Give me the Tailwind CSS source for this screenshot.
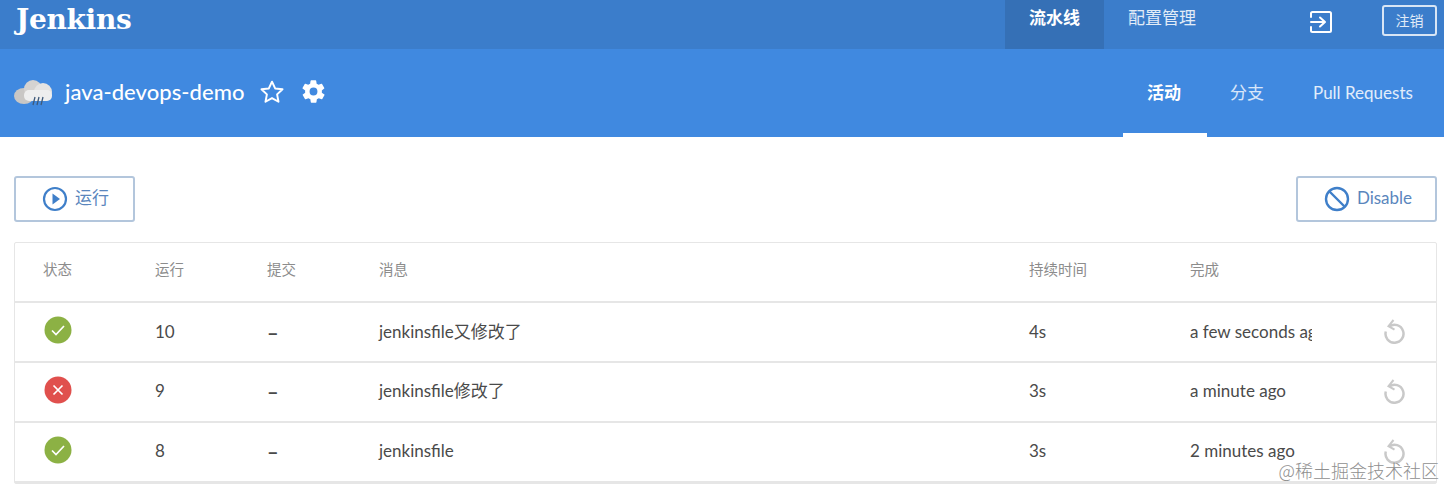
<!DOCTYPE html>
<html lang="zh">
<head>
<meta charset="utf-8">
<script src="https://cdn.jsdelivr.net/npm/@tailwindcss/browser@4"></script>
</head>
<body class="bg-white overflow-hidden font-['Lato','Noto_Sans_CJK_SC',sans-serif] text-[#4a4a4a] h-[488px] relative">
<header class="h-[49px] bg-[#3b7dcb] flex items-stretch text-white">
  <div class="pl-[16px] font-['DejaVu_Serif',serif] font-bold text-[28px] leading-[40px] tracking-[-0.3px]">Jenkins</div>
  <div class="ml-auto flex items-stretch">
    <div class="w-[99px] bg-[#3570b6] flex justify-center pt-[7px] text-[17px] leading-[22px] font-bold">流水线</div>
    <div class="ml-[24px] w-[68px] pt-[7px] text-[17px] leading-[22px] text-white/85 whitespace-nowrap">配置管理</div>
    <div class="ml-[113px] pt-[10px]">
      <svg width="24" height="24" viewBox="0 0 24 24" fill="none" stroke="white" stroke-width="2" stroke-linecap="round" stroke-linejoin="round"><path d="M2 7V3.500A1.500 1.500 0 0 1 3.500 2h17A1.500 1.500 0 0 1 22 3.500v17a1.500 1.500 0 0 1-1.500 1.500h-17A1.500 1.500 0 0 1 2 20.500V17"/><path d="M2 12h13M11 7.500l5 4.500-5 4.500"/></svg>
    </div>
    <div class="ml-[49px] mr-[7px] mt-[5px] w-[55px] h-[31px] border-2 border-white/80 rounded-[3px] flex items-center justify-center text-[14px] text-white/85">注销</div>
  </div>
</header>
<div class="h-[88px] bg-[#4089e0] flex items-stretch text-white">
  <div class="flex items-center pl-[14px] pb-[3px]">
    <svg width="39" height="28" viewBox="0 0 39 28"><ellipse cx="10" cy="18" rx="10" ry="8" fill="#c9c7c5"/><circle cx="19" cy="11" r="9" fill="#d5d3d1"/><circle cx="29" cy="14" r="9" fill="#e4e3e2"/><rect x="10" y="12" width="28" height="11" rx="5" fill="#eeeeee"/><path d="M21 19l-2 8M25 19l-2 8M29 19l-2 8" stroke="#3f5a7a" stroke-width="1.300"/></svg>
    <span class="ml-[12px] text-[22px] leading-[30px] font-medium tracking-[0.05px]">java-devops-demo</span>
    <svg class="ml-[15px]" width="26" height="26" viewBox="0 0 24 24" fill="none" stroke="white" stroke-width="1.800" stroke-linejoin="round"><path d="M12 2.500l2.900 6.200 6.800.8-5 4.700 1.300 6.800-6-3.400-6 3.400 1.300-6.800-5-4.700 6.800-.8z"/></svg>
    <svg class="ml-[15px]" width="27" height="27" viewBox="0 0 24 24" fill="white"><path fill-rule="evenodd" d="M19.400 13a7.600 7.600 0 0 0 0-2l2.100-1.600a.5.500 0 0 0 .1-.6l-2-3.500a.5.500 0 0 0-.6-.2l-2.500 1a7.300 7.300 0 0 0-1.700-1l-.4-2.700a.5.500 0 0 0-.5-.4h-4a.5.500 0 0 0-.5.400l-.4 2.700a7.300 7.300 0 0 0-1.700 1l-2.500-1a.5.500 0 0 0-.6.200l-2 3.500a.5.500 0 0 0 .1.600L4.600 11a7.600 7.600 0 0 0 0 2l-2.100 1.600a.5.500 0 0 0-.1.600l2 3.500a.5.500 0 0 0 .6.200l2.500-1c.5.400 1.100.7 1.700 1l.4 2.700a.5.500 0 0 0 .5.400h4a.5.500 0 0 0 .5-.4l.4-2.700c.6-.3 1.200-.6 1.700-1l2.500 1a.5.500 0 0 0 .6-.2l2-3.500a.5.500 0 0 0-.1-.6zM12 15.500a3.500 3.500 0 1 1 0-7 3.500 3.500 0 0 1 0 7z"/></svg>
  </div>
  <nav class="ml-auto flex items-stretch text-[17px]">
    <div class="w-[84px] border-b-4 border-white flex justify-center pt-[31px] pr-[2px] leading-[26px] font-bold">活动</div>
    <div class="ml-[23px] w-[34px] pt-[31px] leading-[26px] text-white/80 whitespace-nowrap">分支</div>
    <div class="ml-[49px] mr-[31px] w-[100px] pt-[31px] leading-[26px] text-white/85 whitespace-nowrap">Pull Requests</div>
  </nav>
</div>
<main class="px-[14px] pt-[39px]">
  <div class="flex justify-between mr-[-7px]">
    <button class="w-[121px] h-[46px] border-2 border-[#b3c6dc] rounded-[3px] flex items-center justify-center gap-[7px] pl-[2px] text-[#5a86bd] text-[17px]">
      <svg width="26" height="26" viewBox="0 0 26 26"><circle cx="13" cy="13" r="11" fill="none" stroke="#3f7fc9" stroke-width="2.200"/><path d="M10.500 7.500l7.500 5.500-7.500 5.500z" fill="#3f7fc9"/></svg>
      <span class="-mt-[2px]">运行</span>
    </button>
    <button class="w-[141px] h-[46px] border-2 border-[#b3c6dc] rounded-[3px] flex items-center justify-center gap-[7px] pl-[3px] text-[#5a86bd] text-[17px]">
      <svg width="26" height="26" viewBox="0 0 26 26" fill="none" stroke="#3f7fc9" stroke-width="2.400"><circle cx="13" cy="13" r="11"/><path d="M5.500 5.500l15 15"/></svg>
      <span class="-mt-[3px]">Disable</span>
    </button>
  </div>
  <section class="mt-[20px] mr-[-7px] border border-[#e6e6e6] rounded-[2px] w-[1423px]">
    <div class="grid grid-cols-[111px_112px_112px_650px_161px_1fr] pl-[29px] pb-[4px] h-[60px] items-center text-[14.500px] text-[#8c8c8c] border-b-2 border-[#e6e6e6]">
      <span class="-ml-[1px]">状态</span><span>运行</span><span>提交</span><span>消息</span><span>持续时间</span><span>完成</span>
    </div>
    <div class="grid grid-cols-[111px_112px_112px_650px_161px_122px_1fr] pl-[29px] h-[59.500px] items-center text-[17px] border-b-2 border-[#e6e6e6]">
      <svg class="-mt-[3px]" width="28" height="28" viewBox="0 0 28 28"><circle cx="14" cy="14" r="13.500" fill="#8cb144"/><path d="M8 14.500l4 4 8-8.500" fill="none" stroke="white" stroke-width="1.700"/></svg>
      <span>10</span><span class="font-bold text-[20px]">–</span><span>jenkinsfile又修改了</span><span>4s</span><span class="overflow-hidden whitespace-nowrap">a few seconds ago</span>
      <svg class="ml-[70px] -mt-[1px]" width="24" height="26" viewBox="0 0 24 26" fill="none" stroke="#c9c9c9" stroke-width="2.500"><path d="M7.200 8.500a9 9 0 1 1-3.400 5"/><path d="M11.500 2L6.500 8.200l6 3.500" stroke-width="2"/></svg>
    </div>
    <div class="grid grid-cols-[111px_112px_112px_650px_161px_122px_1fr] pl-[29px] h-[60px] pb-[1px] items-center text-[17px] border-b-2 border-[#e6e6e6]">
      <svg class="-mt-[3px]" width="28" height="28" viewBox="0 0 28 28"><circle cx="14" cy="14" r="13.500" fill="#e0504d"/><path d="M9.500 9.500l9 9M18.500 9.500l-9 9" fill="none" stroke="white" stroke-width="1.700"/></svg>
      <span>9</span><span class="font-bold text-[20px]">–</span><span>jenkinsfile修改了</span><span>3s</span><span class="overflow-hidden whitespace-nowrap">a minute ago</span>
      <svg class="ml-[70px] -mt-[1px]" width="24" height="26" viewBox="0 0 24 26" fill="none" stroke="#c9c9c9" stroke-width="2.500"><path d="M7.200 8.500a9 9 0 1 1-3.400 5"/><path d="M11.500 2L6.500 8.200l6 3.500" stroke-width="2"/></svg>
    </div>
    <div class="grid grid-cols-[111px_112px_112px_650px_161px_122px_1fr] pl-[29px] h-[60px] pb-[1px] items-center text-[17px] border-b-2 border-[#e6e6e6]">
      <svg class="-mt-[3px]" width="28" height="28" viewBox="0 0 28 28"><circle cx="14" cy="14" r="13.500" fill="#8cb144"/><path d="M8 14.500l4 4 8-8.500" fill="none" stroke="white" stroke-width="1.700"/></svg>
      <span>8</span><span class="font-bold text-[20px]">–</span><span>jenkinsfile</span><span>3s</span><span class="overflow-hidden whitespace-nowrap">2 minutes ago</span>
      <svg class="ml-[70px] -mt-[1px]" width="24" height="26" viewBox="0 0 24 26" fill="none" stroke="#c9c9c9" stroke-width="2.500"><path d="M7.200 8.500a9 9 0 1 1-3.400 5"/><path d="M11.500 2L6.500 8.200l6 3.500" stroke-width="2"/></svg>
    </div>
  </section>
</main>
<div class="absolute right-[5px] top-[458px] text-[18px] leading-[24px] text-[#8f8f8f] font-['Noto_Sans_CJK_SC',sans-serif] font-light whitespace-nowrap">@稀土掘金技术社区</div>
</body>
</html>
